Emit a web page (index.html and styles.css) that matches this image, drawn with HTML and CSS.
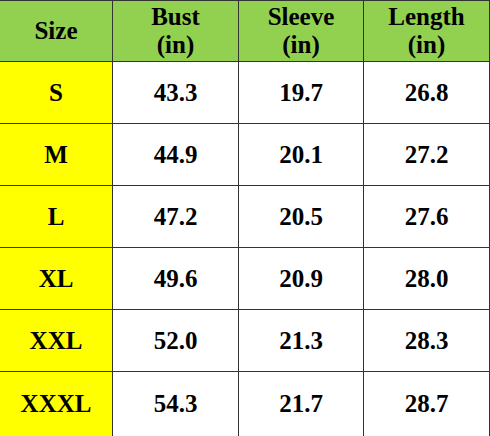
FILE: index.html
```html
<!DOCTYPE html>
<html>
<head>
<meta charset="utf-8">
<link rel="stylesheet" href="styles.css">
</head>
<body>
<div class="chart">
  <div class="cell head">Size</div>
  <div class="cell head">Bust<br>(in)</div>
  <div class="cell head">Sleeve<br>(in)</div>
  <div class="cell head">Length<br>(in)</div>

  <div class="cell size">S</div>
  <div class="cell">43.3</div>
  <div class="cell">19.7</div>
  <div class="cell">26.8</div>

  <div class="cell size">M</div>
  <div class="cell">44.9</div>
  <div class="cell">20.1</div>
  <div class="cell">27.2</div>

  <div class="cell size">L</div>
  <div class="cell">47.2</div>
  <div class="cell">20.5</div>
  <div class="cell">27.6</div>

  <div class="cell size">XL</div>
  <div class="cell">49.6</div>
  <div class="cell">20.9</div>
  <div class="cell">28.0</div>

  <div class="cell size">XXL</div>
  <div class="cell">52.0</div>
  <div class="cell">21.3</div>
  <div class="cell">28.3</div>

  <div class="cell size">XXXL</div>
  <div class="cell">54.3</div>
  <div class="cell">21.7</div>
  <div class="cell">28.7</div>
</div>
</body>
</html>
```

FILE: styles.css
```css
html, body {
  margin: 0;
  padding: 0;
  background: #ffffff;
}

.chart {
  width: 490px;
  height: 436px;
  box-sizing: border-box;
  padding: 1px 1px 0 0;
  background: #333333;
  display: grid;
  grid-template-columns: 112px 125px 124px 125px;
  grid-template-rows: 60px 61px 61px 61px 61px 61px 64px;
  gap: 1px;
  overflow: hidden;
}

.cell {
  background: #ffffff;
  display: flex;
  align-items: center;
  justify-content: center;
  text-align: center;
  font-family: "Liberation Serif", "Times New Roman", serif;
  font-weight: bold;
  font-size: 25px;
  line-height: 28px;
  color: #000000;
}

.head {
  background: #92d050;
}

.size {
  background: #ffff00;
}
```
